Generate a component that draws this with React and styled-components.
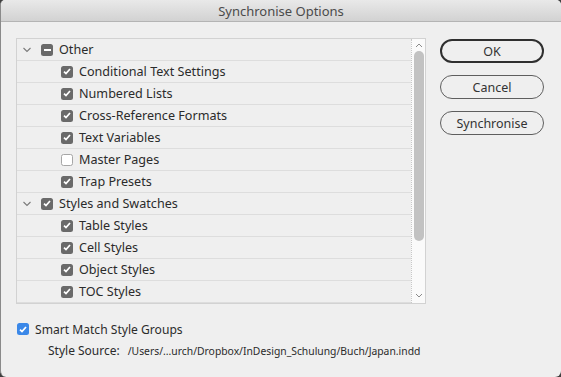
import styled, { createGlobalStyle } from "styled-components";
import { useState } from "react";

const GlobalStyle = createGlobalStyle`
    body {
        margin: 0;
        background: #3f3f3f;
        font-family: "Noto Sans", "DejaVu Sans", sans-serif;
    }
`;

const StyledWindow = styled.div`
    width: 561px;
    height: 377px;
    box-sizing: border-box;
    background: #efefef;
    border-left: 1px solid #8a8a8a;
    border-radius: 5px 5px 6px 6px;
    overflow: hidden;
    display: flex;
    flex-direction: column;
`;

const StyledTitleBar = styled.div`
    height: 22px;
    flex-shrink: 0;
    box-sizing: border-box;
    background: linear-gradient(#e9e9e9, #d2d2d2);
    border-bottom: 1px solid #b4b4b4;
    color: #4b4b4b;
    font-size: 13px;
    line-height: 22px;
    text-align: center;
`;

const StyledBody = styled.div`
    display: flex;
    gap: 14px;
    padding: 16px 16px 0 15px;
`;

const StyledPanel = styled.div`
    width: 410px;
    height: 266px;
    box-sizing: border-box;
    border: 1px solid #d2d2d2;
    display: flex;
`;

const StyledRows = styled.div`
    flex: 1;
`;

const StyledRow = styled.div`
    height: 22px;
    box-sizing: border-box;
    border-bottom: 1px solid #dddddd;
    display: flex;
    align-items: center;
    padding-left: ${(p) => (p.$group ? "5px" : "44px")};
    color: #2b2b2b;
    font-size: 12.6px;
`;

const StyledChevron = styled.svg`
    width: 10px;
    height: 6px;
    margin-right: 9px;
`;

const StyledBox = styled.span`
    width: 12px;
    height: 12px;
    box-sizing: border-box;
    border-radius: 2.5px;
    flex-shrink: 0;
    margin-right: 6px;
    display: flex;
    align-items: center;
    justify-content: center;
    background: ${(p) => (p.$on ? p.$color || "#6a6a6a" : "#ffffff")};
    border: ${(p) => (p.$on ? "none" : "1px solid #a6a6a6")};
`;

const StyledScroll = styled.div`
    width: 13px;
    background: #fafafa;
    border-left: 1px dotted #c8c8c8;
    display: flex;
    flex-direction: column;
    align-items: center;
    padding-top: 4px;
`;

const StyledThumb = styled.div`
    width: 10px;
    height: 190px;
    margin-top: 3px;
    border-radius: 5px;
    background: #c2c2c2;
`;

const StyledArrow = styled.svg`
    width: 8px;
    height: 5px;
`;

const StyledDown = styled(StyledArrow)`
    margin-top: auto;
    margin-bottom: 5px;
`;

const StyledButtons = styled.div`
    display: flex;
    flex-direction: column;
    gap: 12px;
    padding-top: 1px;
`;

const StyledButton = styled.div`
    width: 104px;
    height: 24px;
    box-sizing: border-box;
    border-radius: 12px;
    border: ${(p) => (p.$primary ? "2px solid #2f2f2f" : "1px solid #5e5e5e")};
    color: #333333;
    font-size: 12.5px;
    display: flex;
    align-items: center;
    justify-content: center;
    cursor: pointer;
`;

const StyledFooter = styled.div`
    padding: 18px 0 0 16px;
    color: #2b2b2b;
`;

const StyledSmartMatch = styled.label`
    display: flex;
    align-items: center;
    font-size: 12.1px;
    height: 14px;
`;

const StyledSource = styled.div`
    display: flex;
    align-items: baseline;
    margin-top: 6px;
    padding-left: 31px;
    font-size: 12px;
`;

const StyledPath = styled.span`
    font-size: 10.35px;
    margin-left: 8px;
`;

const Check = ({ on, mixed, color }) => (
    <StyledBox $on={on || mixed} $color={color}>
        {mixed ? (
            <svg width="7" height="2" viewBox="0 0 7 2"><rect width="7" height="2" fill="#fff" /></svg>
        ) : on ? (
            <svg width="8" height="7" viewBox="0 0 8 7">
                <path d="M1 3.6 L3 5.6 L7 1" fill="none" stroke="#fff" strokeWidth="1.7" />
            </svg>
        ) : null}
    </StyledBox>
);

const Chevron = () => (
    <StyledChevron viewBox="0 0 10 6">
        <path d="M1.5 1 L5 4.5 L8.5 1" fill="none" stroke="#7a7a7a" strokeWidth="1.1" />
    </StyledChevron>
);

const groups = [
    {
        name: "Other",
        mixed: true,
        items: [
            ["Conditional Text Settings", true],
            ["Numbered Lists", true],
            ["Cross-Reference Formats", true],
            ["Text Variables", true],
            ["Master Pages", false],
            ["Trap Presets", true],
        ],
    },
    {
        name: "Styles and Swatches",
        mixed: false,
        items: [
            ["Table Styles", true],
            ["Cell Styles", true],
            ["Object Styles", true],
            ["TOC Styles", true],
        ],
    },
];

const App = () => {
    const [smart, setSmart] = useState(true);

    return (
        <>
            <GlobalStyle />
            <StyledWindow>
                <StyledTitleBar>Synchronise Options</StyledTitleBar>
                <StyledBody>
                    <StyledPanel>
                        <StyledRows>
                            {groups.map((g) => (
                                <div key={g.name}>
                                    <StyledRow $group>
                                        <Chevron />
                                        <Check on={!g.mixed} mixed={g.mixed} />
                                        {g.name}
                                    </StyledRow>
                                    {g.items.map(([label, on]) => (
                                        <StyledRow key={label}>
                                            <Check on={on} />
                                            {label}
                                        </StyledRow>
                                    ))}
                                </div>
                            ))}
                        </StyledRows>
                        <StyledScroll>
                            <StyledArrow viewBox="0 0 8 5">
                                <path d="M1 4 L4 1 L7 4" fill="none" stroke="#8a8a8a" strokeWidth="1" />
                            </StyledArrow>
                            <StyledThumb />
                            <StyledDown viewBox="0 0 8 5">
                                <path d="M1 1 L4 4 L7 1" fill="none" stroke="#8a8a8a" strokeWidth="1" />
                            </StyledDown>
                        </StyledScroll>
                    </StyledPanel>
                    <StyledButtons>
                        <StyledButton $primary>OK</StyledButton>
                        <StyledButton>Cancel</StyledButton>
                        <StyledButton>Synchronise</StyledButton>
                    </StyledButtons>
                </StyledBody>
                <StyledFooter>
                    <StyledSmartMatch onClick={() => setSmart(!smart)}>
                        <Check on={smart} color="#3b88e8" />
                        Smart Match Style Groups
                    </StyledSmartMatch>
                    <StyledSource>
                        Style Source:
                        <StyledPath>/Users/...urch/Dropbox/InDesign_Schulung/Buch/Japan.indd</StyledPath>
                    </StyledSource>
                </StyledFooter>
            </StyledWindow>
        </>
    );
};

export default App;
